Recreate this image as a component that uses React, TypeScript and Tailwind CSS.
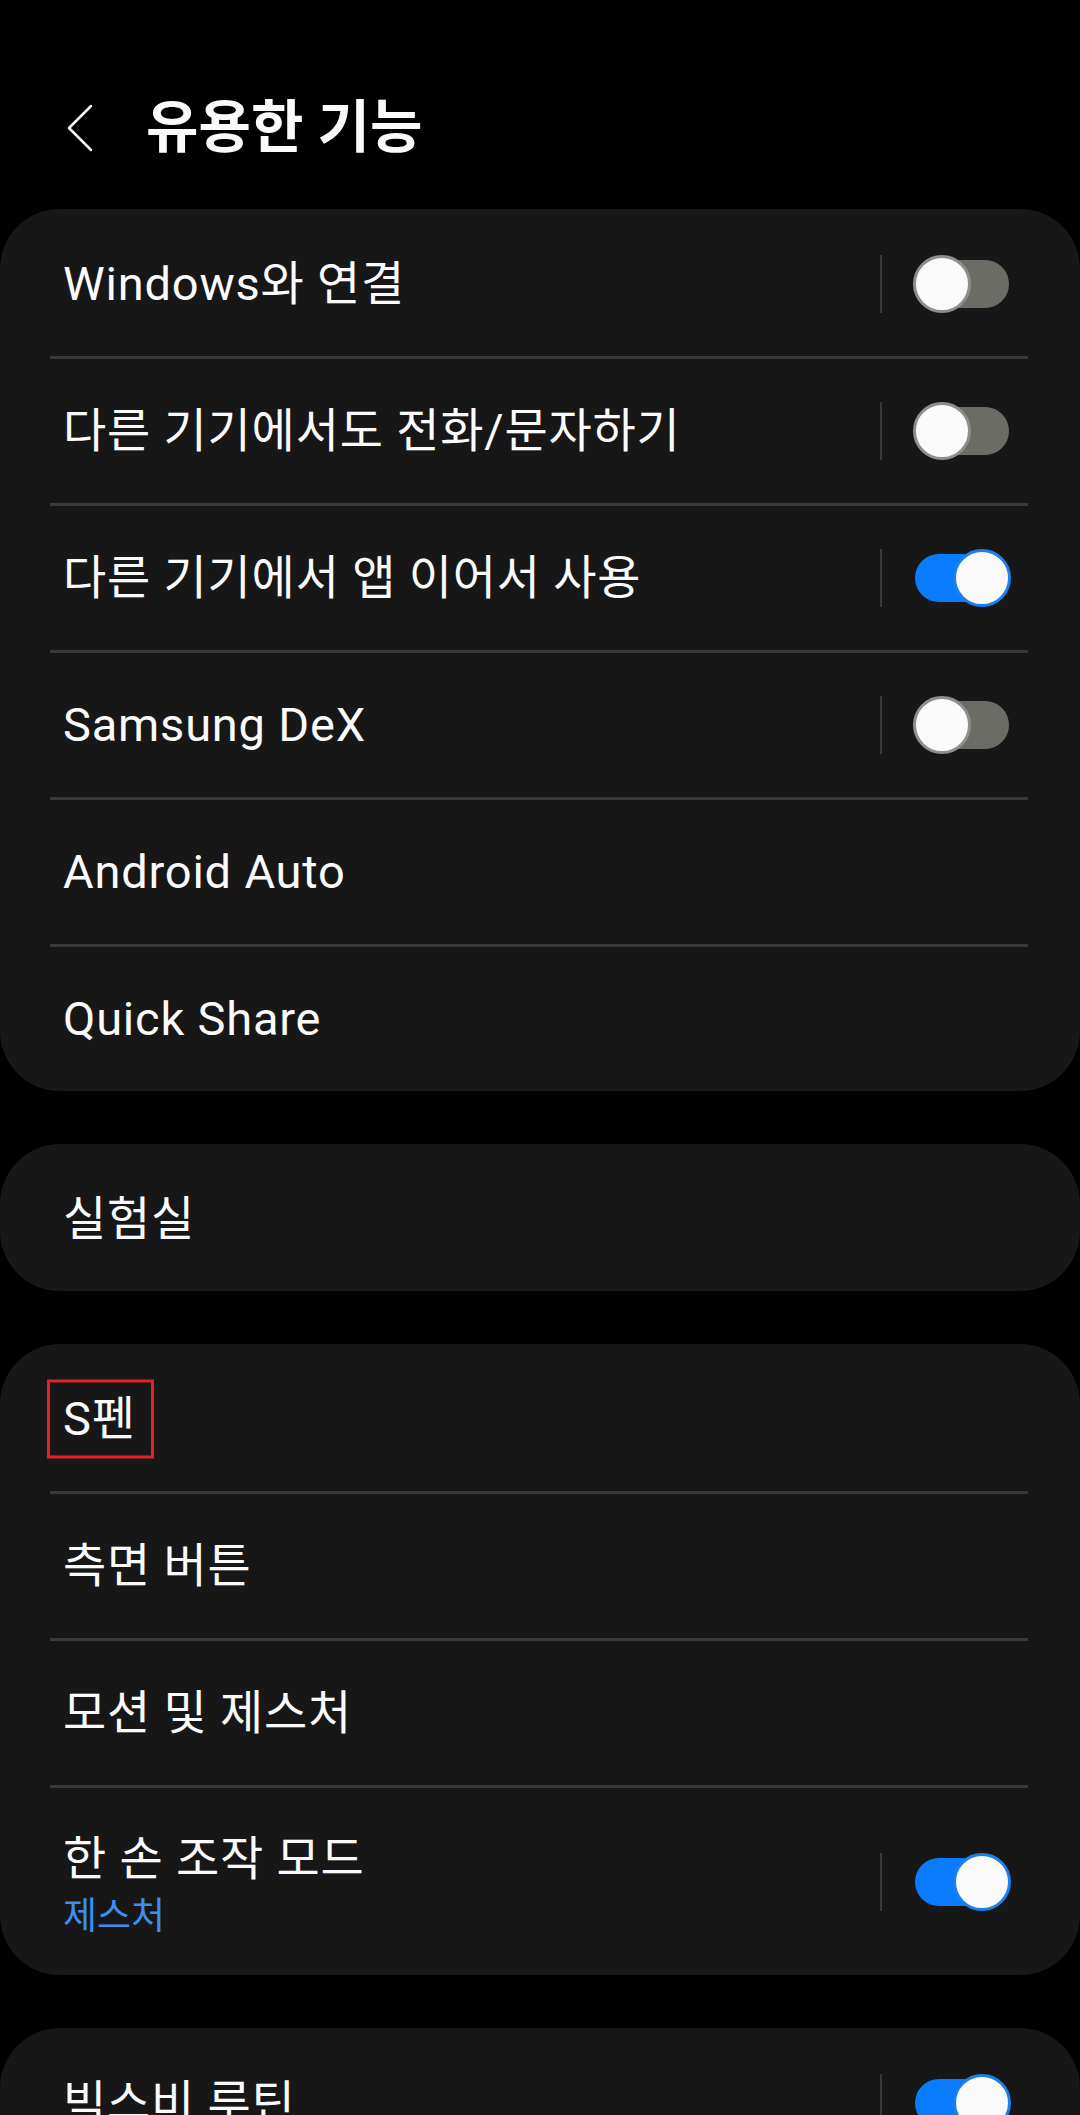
import React from 'react';

type Row = {
  label: string;
  sub?: string;
  toggle?: 'on' | 'off';
  marked?: boolean;
};

const GROUPS: { rows: Row[] }[] = [
  {
    rows: [
      { label: 'Windows와 연결', toggle: 'off' },
      { label: '다른 기기에서도 전화/문자하기', toggle: 'off' },
      { label: '다른 기기에서 앱 이어서 사용', toggle: 'on' },
      { label: 'Samsung DeX', toggle: 'off' },
      { label: 'Android Auto' },
      { label: 'Quick Share' },
    ],
  },
  { rows: [{ label: '실험실' }] },
  {
    rows: [
      { label: 'S펜', marked: true },
      { label: '측면 버튼' },
      { label: '모션 및 제스처' },
      { label: '한 손 조작 모드', sub: '제스처', toggle: 'on' },
    ],
  },
  { rows: [{ label: '빅스비 루틴', toggle: 'on' }] },
];

const Toggle = ({ on }: { on: boolean }) => (
  <div className="relative w-[98px] h-[58px] shrink-0">
    <div
      className={`absolute left-[2px] right-[2px] top-[5px] h-[48px] rounded-full ${
        on ? 'bg-[#0a7cff]' : 'bg-[#6c6c66]'
      }`}
    />
    <div
      className={`absolute top-0 w-[58px] h-[58px] rounded-full border-[3px] bg-[#fafafa] ${
        on ? 'right-0 border-[#1c7fec]' : 'left-0 border-[#8e8e8e]'
      }`}
    />
  </div>
);

const SettingRow = ({ row }: { row: Row }) => (
  <div
    className={`flex items-center pl-[63px] pr-[69px] ${row.sub ? 'h-[187px]' : 'h-[144px]'}`}
  >
    <div className={`flex-1 min-w-0 ${row.sub ? 'pt-[6px]' : ''}`}>
      {row.marked ? (
        <span className="relative inline-block text-[47px] tracking-[0.8px] leading-[56px] text-[#fafafa]">
          {row.label}
          <span className="absolute -left-[16px] -right-[18px] top-1/2 -translate-y-1/2 h-[79px] border-[3px] border-[#e3212b]" />
        </span>
      ) : (
        <div className="text-[47px] tracking-[0.8px] leading-[56px] text-[#fafafa] whitespace-nowrap">
          {row.label}
        </div>
      )}
      {row.sub && <div className="text-[37px] leading-[44px] text-[#3d8ef0] mt-[8px]">{row.sub}</div>}
    </div>
    {row.toggle && (
      <div className="flex items-center">
        <div className="w-[2px] h-[58px] bg-[#3a3a3a] mr-[31px]" />
        <Toggle on={row.toggle === 'on'} />
      </div>
    )}
  </div>
);

export default function App() {
  return (
    <div
      className="w-[1080px] h-[2115px] overflow-hidden bg-black"
      style={{ fontFamily: "Roboto, 'Noto Sans CJK KR', sans-serif" }}
    >
      {/* header */}
      <div className="h-[209px] pt-[46px] flex items-center">
        <svg className="ml-[65px]" width="30" height="50" viewBox="0 0 30 50" fill="none">
          <path d="M26 3 L4 25 L26 47" stroke="#fafafa" strokeWidth="2.5" strokeLinecap="round" strokeLinejoin="round" />
        </svg>
        <h1 className="ml-[51px] text-[57px] font-bold text-[#fafafa] leading-none">유용한 기능</h1>
      </div>

      <div className="flex flex-col gap-[53px]">
        {GROUPS.map((group, gi) => (
          <div key={gi} className="bg-[#171717] rounded-[60px] pt-[3px]">
            {group.rows.map((row, ri) => (
              <React.Fragment key={row.label}>
                {ri > 0 && <div className="ml-[50px] mr-[52px] h-[3px] bg-[#393939]" />}
                <SettingRow row={row} />
              </React.Fragment>
            ))}
          </div>
        ))}
      </div>
    </div>
  );
}
